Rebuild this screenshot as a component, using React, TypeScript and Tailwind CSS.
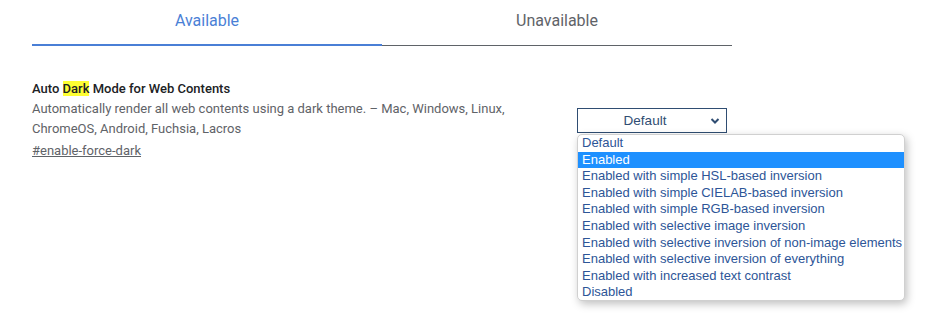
import React from "react";

const options = [
  "Default",
  "Enabled",
  "Enabled with simple HSL-based inversion",
  "Enabled with simple CIELAB-based inversion",
  "Enabled with simple RGB-based inversion",
  "Enabled with selective image inversion",
  "Enabled with selective inversion of non-image elements",
  "Enabled with selective inversion of everything",
  "Enabled with increased text contrast",
  "Disabled",
];

export default function App() {
  return (
    <div className="w-[937px] h-[324px] bg-white overflow-hidden pl-[32px] font-['Roboto',sans-serif]">
      <div className="flex w-[700px]">
        <div className="w-[350px] h-[46px] border-b-2 border-[#4a7fd6] flex justify-center pt-[11px] text-[16px] leading-[20px] text-[#4a7fd6]">
          Available
        </div>
        <div className="w-[350px] h-[46px] border-b border-[#5f6368] flex justify-center pt-[11px] text-[16px] leading-[20px] text-[#5f6368]">
          Unavailable
        </div>
      </div>
      <div className="flex mt-[33px]">
        <div className="w-[545px]">
          <div className="text-[13px] leading-[20px] font-medium text-[#202124]">
            Auto <span className="bg-[#ffff33]">Dark</span> Mode for Web Contents
          </div>
          <div className="text-[13px] leading-[20px] text-[#5f6368] w-[500px]">
            Automatically render all web contents using a dark theme. – Mac, Windows, Linux, ChromeOS, Android, Fuchsia, Lacros
          </div>
          <div className="mt-[2px] text-[13px] leading-[20px] text-[#5f6368] underline">
            #enable-force-dark
          </div>
        </div>
        <div className="relative mt-[29px]">
          <div className="w-[150px] h-[25px] border border-[#2f4d72] flex items-center justify-center relative font-['Liberation_Sans',Arial,sans-serif] text-[13.5px] text-[#2f4d72]">
            <span className="mr-[14px] mt-[1px]">Default</span>
            <svg className="absolute right-[6px] top-[8px]" width="10" height="8" viewBox="0 0 10 8">
              <path d="M1.5 2 L5 5.5 L8.5 2" fill="none" stroke="#2f4d72" strokeWidth="2" />
            </svg>
          </div>
          <div className="absolute left-0 top-[26px] w-[328px] h-[167px] bg-white border border-[#d0d0d0] rounded-[5px] shadow-[2px_3px_8px_rgba(0,0,0,0.25)] overflow-hidden font-['Liberation_Sans',Arial,sans-serif] text-[13px] leading-[16.6px]">
            {options.map((o, i) => (
              <div
                key={o}
                className={
                  i === 1
                    ? "h-[16.6px] pl-[4px] bg-[#1e90ff] text-white whitespace-nowrap"
                    : "h-[16.6px] pl-[4px] text-[#2d5597] whitespace-nowrap"
                }
              >
                {o}
              </div>
            ))}
          </div>
        </div>
      </div>
    </div>
  );
}
